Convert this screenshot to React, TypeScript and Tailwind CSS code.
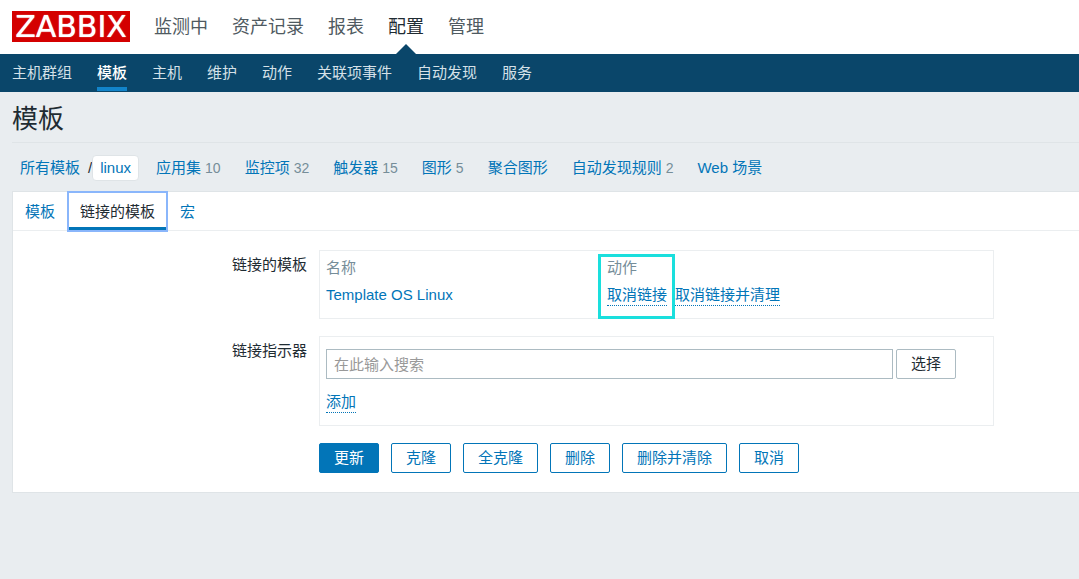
import { ReactNode } from 'react';

interface NavItem {
  label: string;
  active?: boolean;
}

interface ObjectLink {
  label: string;
  count?: number;
}

const mainMenu: NavItem[] = [
  { label: '监测中' },
  { label: '资产记录' },
  { label: '报表' },
  { label: '配置', active: true },
  { label: '管理' },
];

const subMenu: NavItem[] = [
  { label: '主机群组' },
  { label: '模板', active: true },
  { label: '主机' },
  { label: '维护' },
  { label: '动作' },
  { label: '关联项事件' },
  { label: '自动发现' },
  { label: '服务' },
];

const objectLinks: ObjectLink[] = [
  { label: '应用集', count: 10 },
  { label: '监控项', count: 32 },
  { label: '触发器', count: 15 },
  { label: '图形', count: 5 },
  { label: '聚合图形' },
  { label: '自动发现规则', count: 2 },
  { label: 'Web 场景' },
];

const formActions = ['克隆', '全克隆', '删除', '删除并清除', '取消'];

function Header() {
  return (
    <header>
      <div className="flex h-[54px] items-center bg-white pl-3">
        <a
          href="#"
          className="mb-px flex h-[31px] w-[118px] items-center justify-center bg-[#d40000] font-['DejaVu_Sans',sans-serif] text-[30px] leading-[31px] text-white text-shadow-[0_0_1px_#ffffff]"
        >
          ZABBIX
        </a>
        <nav className="ml-6 h-full">
          <ul className="flex h-full gap-6">
            {mainMenu.map((item) => (
              <li key={item.label} className="relative flex items-center">
                <a
                  href="#"
                  className={
                    item.active
                      ? 'text-[18px] leading-6 text-[#1f2c33]'
                      : 'text-[18px] leading-6 text-[#4f5a61]'
                  }
                >
                  {item.label}
                </a>
                {item.active && (
                  <svg
                    className="absolute bottom-0 left-1/2 -translate-x-1/2"
                    width="20"
                    height="10"
                    viewBox="0 0 20 10"
                    aria-hidden="true"
                  >
                    <path d="M0 10L10 0L20 10Z" fill="#0a466a" />
                  </svg>
                )}
              </li>
            ))}
          </ul>
        </nav>
      </div>
      <nav className="h-[38px] bg-[#0a466a] pb-px pl-3">
        <ul className="flex h-full gap-[25px]">
          {subMenu.map((item) => (
            <li key={item.label}>
              <a
                href="#"
                className={
                  item.active
                    ? 'block h-full border-b-4 border-[#1284ca] pt-2 leading-[22px] font-medium text-white'
                    : 'block h-full pt-2 leading-[22px] text-[#d5e1e8]'
                }
              >
                {item.label}
              </a>
            </li>
          ))}
        </ul>
      </nav>
    </header>
  );
}

function Breadcrumbs() {
  return (
    <div className="flex h-12 items-center pt-px pl-2 whitespace-nowrap">
      <a href="#" className="text-[#0275b8]">所有模板</a>
      <span className="ml-2">/</span>
      <a
        href="#"
        className="mr-[17px] h-[26px] rounded-sm border border-[#dfe4e7] bg-white px-[7px] leading-6 text-[#0275b8]"
      >
        linux
      </a>
      <ul className="flex gap-6">
        {objectLinks.map((link) => (
          <li key={link.label}>
            <a href="#" className="text-[#0275b8]">{link.label}</a>
            {link.count !== undefined && (
              <span className="ml-1 text-sm text-[#768d99]">{link.count}</span>
            )}
          </li>
        ))}
      </ul>
    </div>
  );
}

function Tabs() {
  return (
    <div role="tablist" className="flex h-[39px] gap-px border-b border-[#ebeef0]">
      <button type="button" role="tab" aria-selected="false" className="px-3 pt-px text-[#0275b8]">
        模板
      </button>
      <button
        type="button"
        role="tab"
        aria-selected="true"
        className="relative -mb-px border-b-4 border-[#0275b8] px-3 pt-1 outline-2 -outline-offset-1 outline-[#8ab6fb]"
      >
        链接的模板
      </button>
      <button type="button" role="tab" aria-selected="false" className="px-3 pt-px text-[#0275b8]">
        宏
      </button>
    </div>
  );
}

function ActionLink({ children }: { children: ReactNode }) {
  return (
    <button
      type="button"
      className="block border-b border-dotted border-[#0275b8] leading-[21px] text-[#0275b8]"
    >
      {children}
    </button>
  );
}

function LinkedTemplates() {
  return (
    <div className="h-[69px] w-full max-w-[675px] border border-[#ebeef0] px-1.5 pt-1.5">
      <table className="w-full table-fixed text-left">
        <thead className="text-[#768d99]">
          <tr>
            <th className="w-[281px] p-0 leading-[22px] font-normal">名称</th>
            <th className="p-0 leading-[22px] font-normal">动作</th>
          </tr>
        </thead>
        <tbody>
          <tr>
            <td className="p-0 pt-[5px] align-top leading-[22px]">
              <a href="#" className="text-[#0275b8]">Template OS Linux</a>
            </td>
            <td className="relative p-0 pt-[5px] align-top">
              <div className="flex gap-2">
                <ActionLink>取消链接</ActionLink>
                <ActionLink>取消链接并清理</ActionLink>
              </div>
              {/* callout around the unlink action */}
              <div className="pointer-events-none absolute -top-[25px] -left-[9px] h-[65px] w-[77px] border-3 border-[#1adfdd]" />
            </td>
          </tr>
        </tbody>
      </table>
    </div>
  );
}

function LinkNewTemplates() {
  return (
    <div className="w-full max-w-[675px] border border-[#ebeef0] px-1.5 py-3">
      <div className="flex gap-[3px]">
        <input
          id="new-templates"
          type="text"
          placeholder="在此输入搜索"
          className="h-[30px] w-full max-w-[567px] border border-[#acbbc2] px-[7px] placeholder:text-[#999999]"
        />
        <button
          type="button"
          className="h-[30px] shrink-0 rounded-xs border border-[#acbbc2] px-3.5"
        >
          选择
        </button>
      </div>
      <div className="mt-3 flex">
        <ActionLink>添加</ActionLink>
      </div>
    </div>
  );
}

export default function App() {
  return (
    <div className="min-h-screen bg-[#e9edf0] font-['Liberation_Sans','Noto_Sans_CJK_SC',sans-serif] text-[15px] leading-[22px] text-[#1f2c33]">
      <Header />
      <main className="pl-3">
        <h1 className="flex h-[51px] items-center border-b border-[#dfe4e7] pt-1 text-[26px] leading-8">
          模板
        </h1>
        <Breadcrumbs />
        <form className="border border-r-0 border-[#dfe4e7] bg-white" onSubmit={(e) => e.preventDefault()}>
          <Tabs />
          <div className="flex flex-col gap-[17px] pt-[19px] pb-[19px]">
            <div className="flex gap-3">
              <div className="w-[294px] shrink-0 pt-1 text-right">链接的模板</div>
              <LinkedTemplates />
            </div>
            <div className="flex gap-3">
              <label htmlFor="new-templates" className="w-[294px] shrink-0 pt-1 text-right">
                链接指示器
              </label>
              <LinkNewTemplates />
            </div>
            <div className="flex gap-3 pl-[306px]">
              <button
                type="submit"
                className="h-[30px] rounded-xs border border-[#0275b8] bg-[#0275b8] px-3.5 text-white"
              >
                更新
              </button>
              {formActions.map((label) => (
                <button
                  key={label}
                  type="button"
                  className="h-[30px] rounded-xs border border-[#0275b8] px-3.5 text-[#0275b8]"
                >
                  {label}
                </button>
              ))}
            </div>
          </div>
        </form>
      </main>
    </div>
  );
}
